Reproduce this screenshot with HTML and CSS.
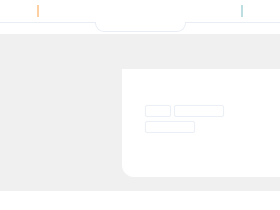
FILE: index.html
```html
<!DOCTYPE html>
<html lang="en">
<head>
    <meta charset="UTF-8">
    <meta name="viewport" content="width=device-width, initial-scale=1.0">
    <title>Board</title>
    <link rel="stylesheet" href="styles.css">
</head>
<body>

    <div class="topbar">
        <span class="mark mark-orange"></span>
        <span class="mark mark-teal"></span>
        <div class="tab"></div>
    </div>

    <div class="stage">
        <div class="panel">
            <div class="chips">
                <div class="row">
                    <span class="chip chip-sm"></span>
                    <span class="chip chip-lg"></span>
                </div>
                <div class="row">
                    <span class="chip chip-lg"></span>
                </div>
            </div>
        </div>
    </div>

</body>
</html>
```

FILE: styles.css
```css
body {
    margin: 0;
    font-family: "Liberation Sans", Arial, sans-serif;
    background: white;
}
.topbar {
    position: relative;
    height: 22px;
    border-bottom: 1px solid #e9eef4;
    margin-bottom: 11px;
}
.mark {
    position: absolute;
    top: 5px;
    width: 2px;
    height: 12px;
}
.mark-orange { left: 37px; background: #fdd0a4; }
.mark-teal { left: 241px; background: #bcdde2; }

/* tab hanging under the bar */
.tab {
    position: absolute;
    left: 95px;
    top: 22px;
    width: 89px;
    height: 9px;
    background: white;
    border: 1px solid #e9eef4;
    border-top: none;
    border-radius: 0 0 9px 9px;
}
.stage {
    background: #f0f0f0;
    padding: 35px 0 14px 122px;
}
.panel {
    background: white;
    height: 108px;
    border-radius: 0 0 0 12px;
    padding: 36px 0 0 23px;
    box-sizing: border-box;
}
.chips { display: flex; flex-direction: column; gap: 4px; }
.row { display: flex; gap: 3px; }
.chip {
    display: block;
    height: 12px;
    box-sizing: border-box;
    border: 1px solid #ebeff6;
    border-radius: 2px;
    box-shadow: 0 0 1px #f1f4f9;
}
.chip-sm { width: 26px; }
.chip-lg { width: 50px; }
```
